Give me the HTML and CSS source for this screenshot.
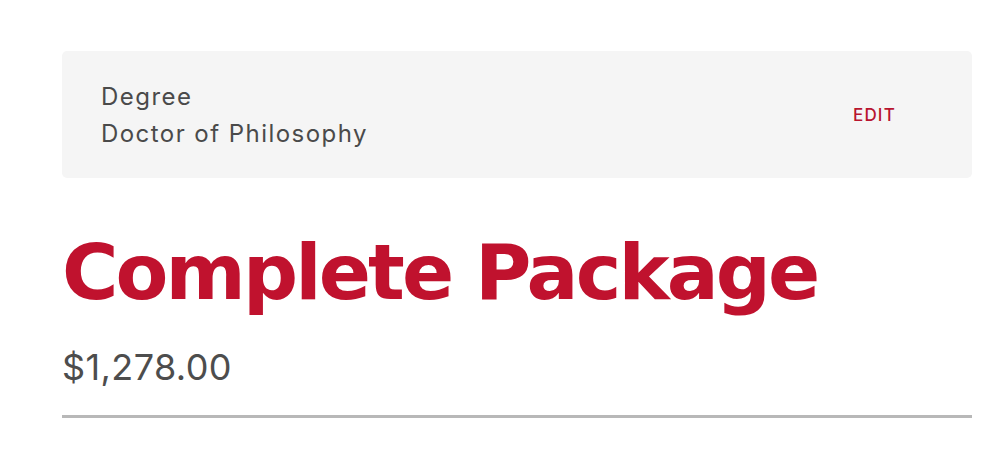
FILE: index.html
```html
<!DOCTYPE html>
<html lang="en">
<head>
<meta charset="utf-8">
<title>Complete Package</title>
<link rel="stylesheet" href="styles.css">
</head>
<body>
<main class="page">
  <section class="card">
    <div class="card-info">
      <div class="card-label">Degree</div>
      <div class="card-value">Doctor of Philosophy</div>
    </div>
    <a class="card-edit" href="#">EDIT</a>
  </section>
  <h1 class="package-title">Complete Package</h1>
  <div class="package-price">$1,278.00</div>
  <hr class="divider">
</main>
</body>
</html>
```
FILE: styles.css
```css
html, body {
  margin: 0;
  padding: 0;
  background: #ffffff;
}
.page {
  padding: 51px 28px 0 62px;
  display: flex;
  flex-direction: column;
}
.card {
  background: #f5f5f5;
  border-radius: 5px;
  height: 127px;
  box-sizing: border-box;
  padding: 0 76px 0 39px;
  display: flex;
  align-items: center;
  justify-content: space-between;
}
.card-info {
  font-family: Inter, "Liberation Sans", sans-serif;
  font-size: 24px;
  line-height: 37px;
  color: #4a4a4a;
  letter-spacing: 1.45px;
}
.card-edit {
  font-family: Inter, "Liberation Sans", sans-serif;
  font-size: 17px;
  font-weight: 500;
  letter-spacing: 1.2px;
  color: #b8152f;
  text-decoration: none;
}
.package-title {
  margin: 50px 0 0 0;
  font-family: "DejaVu Sans", sans-serif;
  font-weight: 700;
  font-size: 77px;
  line-height: 90px;
  letter-spacing: -2.9px;
  color: #c0122e;
}
.package-price {
  margin-top: 27px;
  font-family: Inter, "Liberation Sans", sans-serif;
  font-size: 36px;
  line-height: 44px;
  letter-spacing: 0.4px;
  color: #4d4d4d;
}
.divider {
  margin: 26px 0 0 0;
  border: 0;
  height: 3px;
  background: #b8b8b8;
}
```
